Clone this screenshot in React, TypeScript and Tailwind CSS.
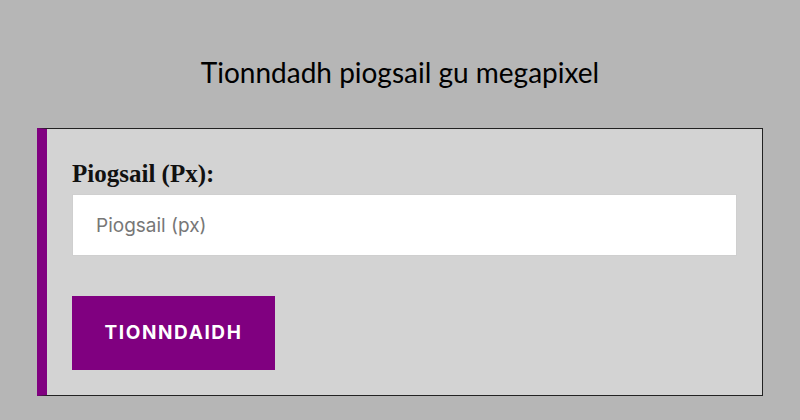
export default function App() {
  return (
    <div className="min-h-[420px] w-[800px] bg-[#b6b6b6] pt-[52px]">
      <h1 className="text-center text-[28px] leading-[40px] text-black font-['Lato',sans-serif]">
        Tionndadh piogsail gu megapixel
      </h1>
      <div className="mx-[37px] mt-[36px] flex border border-[#222] border-l-[10px] border-l-[#800080] bg-[#d3d3d3] px-[25px] pt-[31px] pb-[25px]">
        <div className="flex w-full flex-col">
          <label className="mb-[6px] text-[25px] font-bold leading-[28px] text-[#111] font-['Liberation_Serif',serif]">
            Piogsail (Px):
          </label>
          <input
            type="text"
            placeholder="Piogsail (px)"
            className="h-[62px] w-full border border-[#cfcfcf] bg-white px-[23px] text-[19px] text-[#333] placeholder:text-[#777] outline-none font-['Inter',sans-serif]"
          />
          <div className="mt-[40px]">
            <button className="h-[74px] w-[203px] bg-[#800080] text-[19px] font-bold tracking-[1.6px] text-white font-['Inter',sans-serif]">
              TIONNDAIDH
            </button>
          </div>
        </div>
      </div>
    </div>
  );
}
